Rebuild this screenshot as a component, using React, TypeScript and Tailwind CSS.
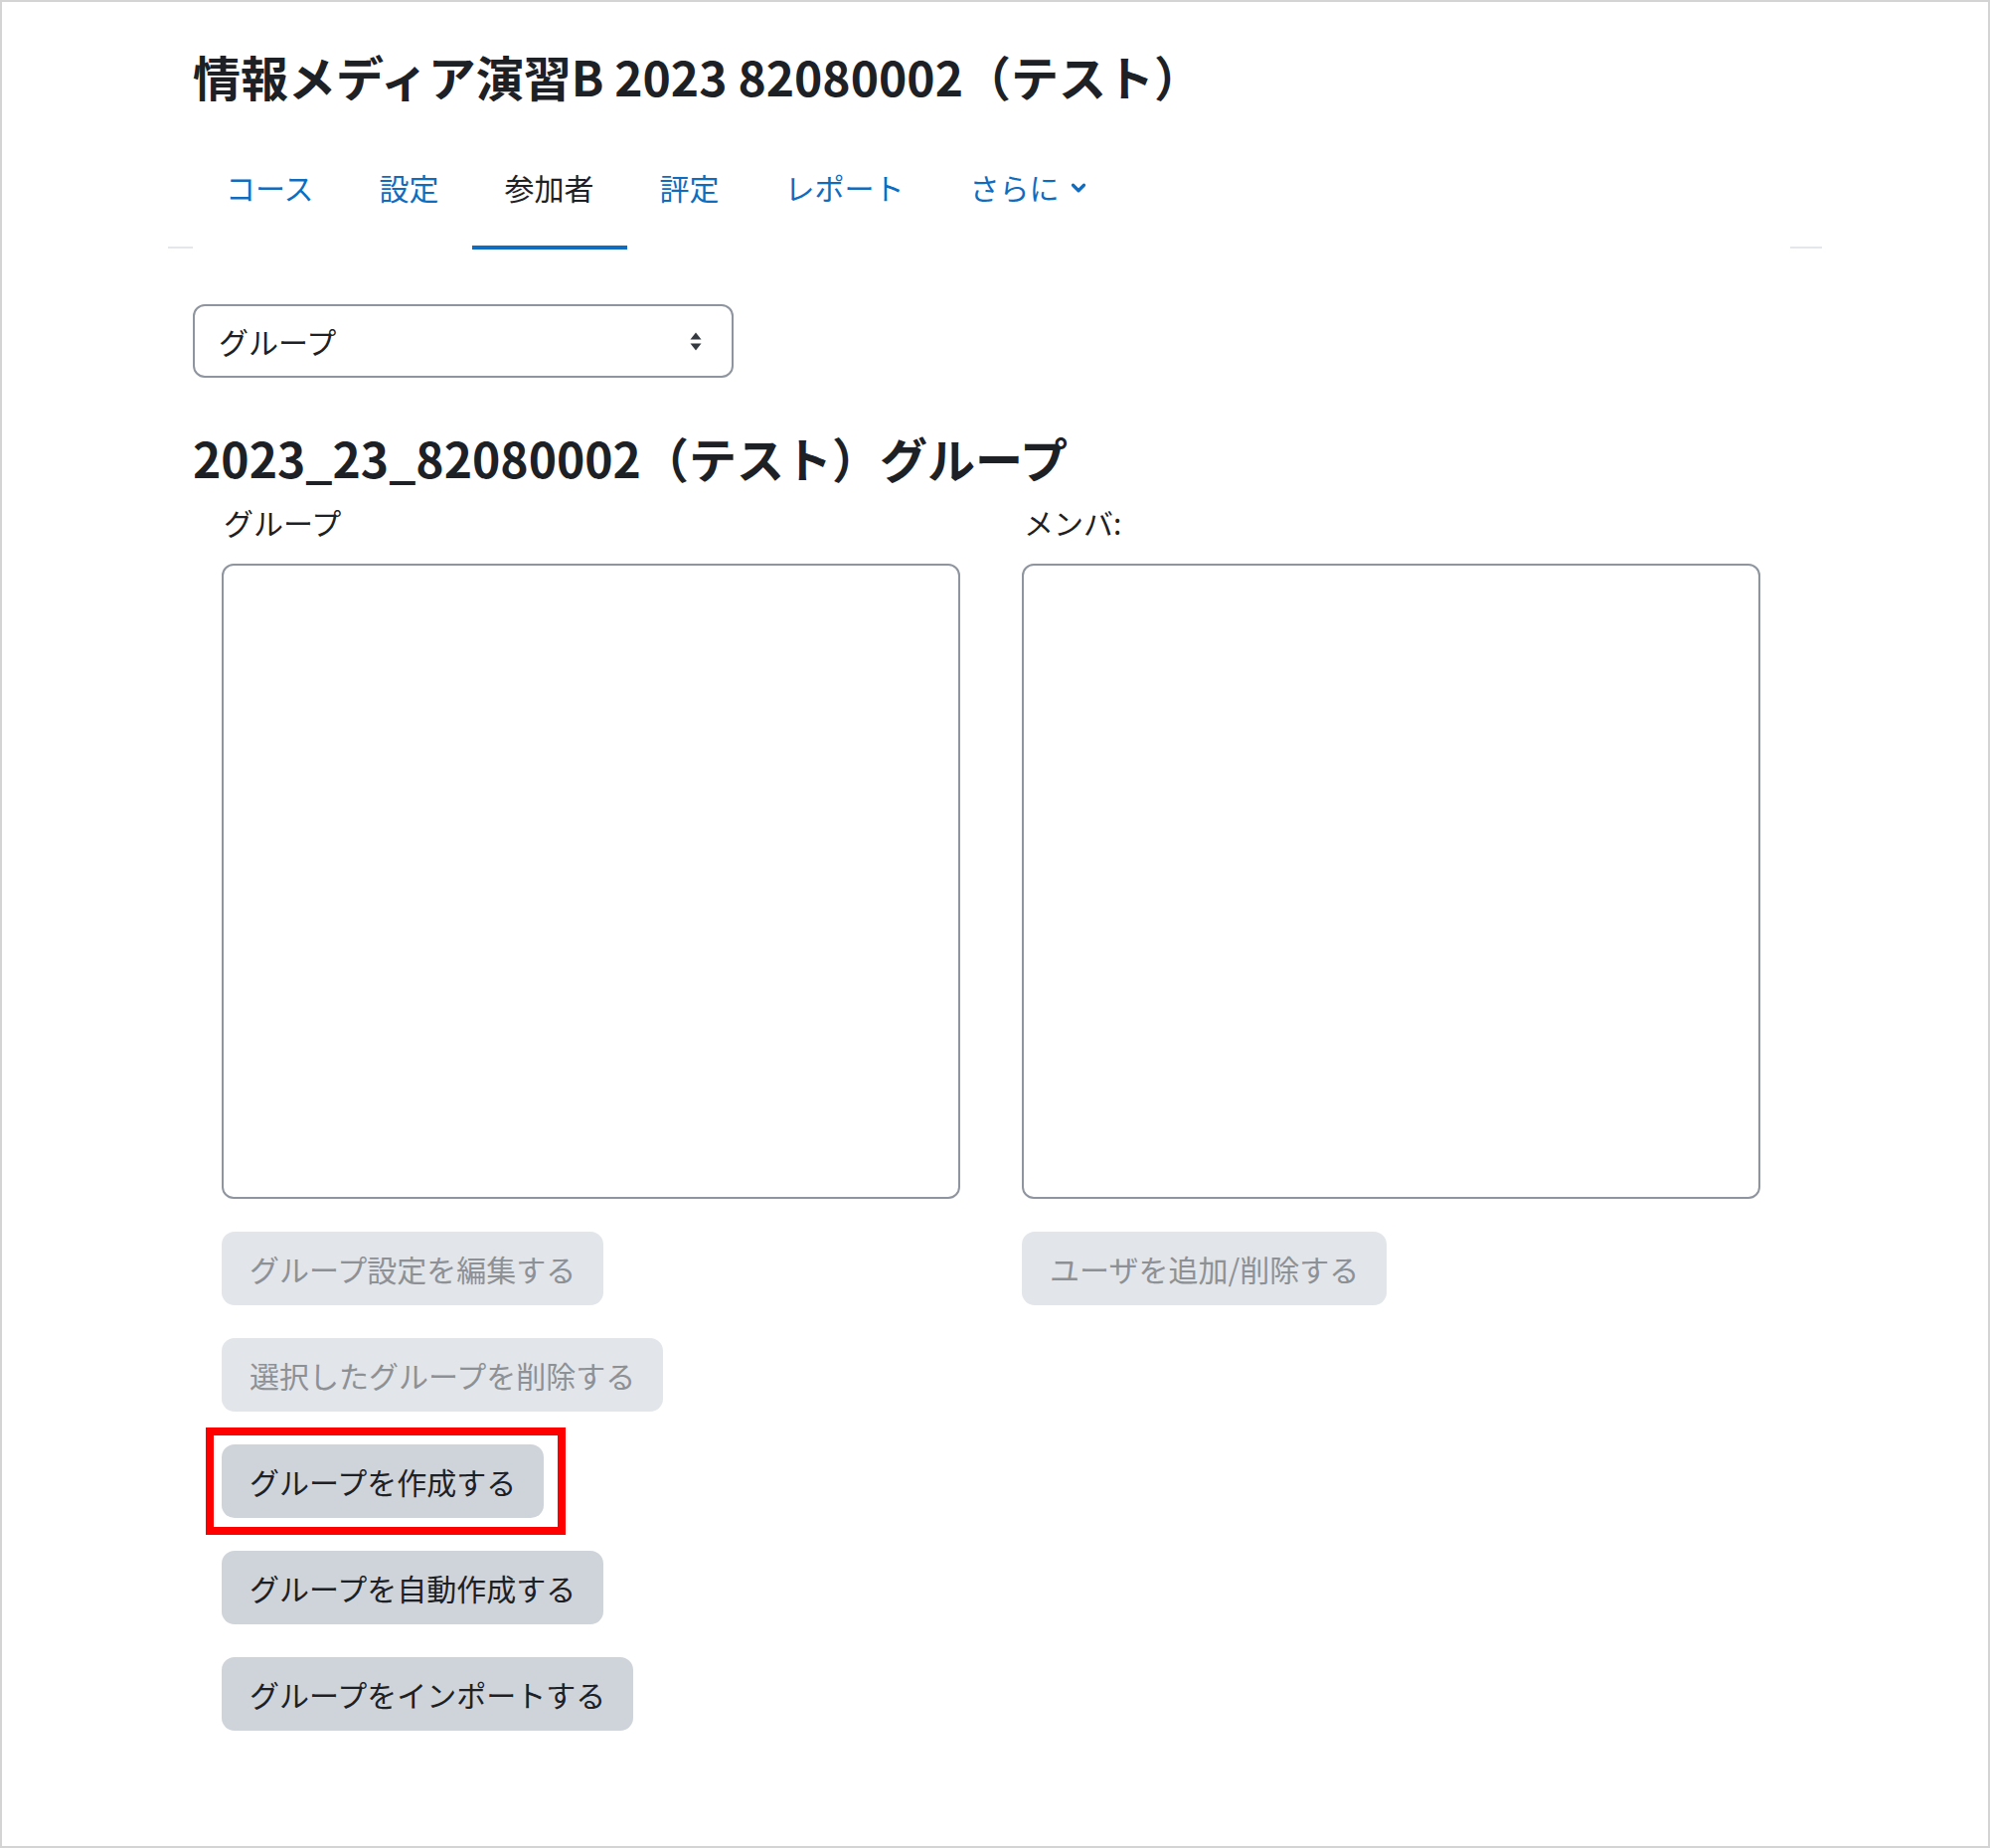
import { ChevronDown } from 'lucide-react';

const tabs = ['コース', '設定', '参加者', '評定', 'レポート'];

function Button({ label, disabled }: { label: string; disabled?: boolean }) {
    return (
        <button
            className={
                disabled
                    ? 'h-[74px] px-[28px] rounded-[13px] text-[30px] leading-[45px] bg-[#e2e5e9] text-[#8d9196] whitespace-nowrap'
                    : 'h-[74px] px-[28px] rounded-[13px] text-[30px] leading-[45px] bg-[#ced4da] text-[#1d2125] whitespace-nowrap'
            }
        >
            {label}
        </button>
    );
}

export default function App() {
    return (
        <div
            className="w-[2002px] h-[1859px] border-2 border-[#d4d4d4] bg-white text-[#1d2125]"
            style={{ fontFamily: '"Noto Sans CJK JP", "Noto Sans", sans-serif' }}
        >
            <div className="pl-[192px] pt-[45px]">
                <h1 className="text-[48px] leading-[58px] font-bold whitespace-nowrap">
                    情報メディア演習B 2023 82080002（テスト）
                </h1>

                <div className="-ml-[25px] w-[1664px] mt-[45px] flex items-end">
                    <div className="w-[25px] h-[2px] mb-[1px] bg-[#e3e6ea]" />
                    {tabs.map((t) => (
                        <a
                            key={t}
                            className={
                                t === '参加者'
                                    ? 'px-[33px] pt-[16px] pb-[36px] border-b-4 border-[#0f6cbf] text-[30px] leading-[45px] text-[#1d2125]'
                                    : 'px-[33px] pt-[16px] pb-[36px] border-b-4 border-transparent text-[30px] leading-[45px] text-[#0f6cbf]'
                            }
                        >
                            {t}
                        </a>
                    ))}
                    <a className="px-[33px] pt-[16px] pb-[36px] border-b-4 border-transparent text-[30px] leading-[45px] text-[#0f6cbf] flex items-center gap-[8px]">
                        さらに
                        <ChevronDown className="w-[22px] h-[22px]" strokeWidth={3.5} />
                    </a>
                    <div className="flex-1" />
                    <div className="w-[32px] h-[2px] mb-[1px] bg-[#e3e6ea]" />
                </div>

                <div className="mt-[55px] w-[544px] h-[74px] border-2 border-[#8f959e] rounded-[12px] pl-[24px] pr-[29px] flex items-center justify-between">
                    <span className="text-[30px] leading-[45px]">グループ</span>
                    <svg width="14" height="21" viewBox="0 0 14 21" className="text-[#343a40]">
                        <path d="M7 1.5 L12.5 8.5 L1.5 8.5 Z" fill="currentColor" />
                        <path d="M7 19.5 L12.5 12.5 L1.5 12.5 Z" fill="currentColor" />
                    </svg>
                </div>

                <h2 className="mt-[51px] text-[48px] leading-[58px] font-bold whitespace-nowrap">
                    2023_23_82080002（テスト）グループ
                </h2>

                <div className="ml-[29px] mt-[14px] grid grid-cols-[743px_743px] gap-x-[62px]">
                    <div className="flex flex-col items-start">
                        <label className="pl-[2px] text-[30px] leading-[45px]">グループ</label>
                        <div className="mt-[19px] w-[743px] h-[639px] border-2 border-[#8f959e] rounded-[12px]" />
                        <div className="mt-[33px] flex flex-col items-start gap-[33px]">
                            <Button label="グループ設定を編集する" disabled />
                            <Button label="選択したグループを削除する" disabled />
                            <div className="relative">
                                <Button label="グループを作成する" />
                                <div className="absolute -left-[16px] -right-[22px] -top-[17px] -bottom-[17px] border-[8px] border-[#ff0000]" />
                            </div>
                            <Button label="グループを自動作成する" />
                            <Button label="グループをインポートする" />
                        </div>
                    </div>
                    <div className="flex flex-col items-start">
                        <label className="pl-[2px] text-[30px] leading-[45px]">メンバ:</label>
                        <div className="mt-[19px] w-[743px] h-[639px] border-2 border-[#8f959e] rounded-[12px]" />
                        <div className="mt-[33px]">
                            <Button label="ユーザを追加/削除する" disabled />
                        </div>
                    </div>
                </div>
            </div>
        </div>
    );
}
